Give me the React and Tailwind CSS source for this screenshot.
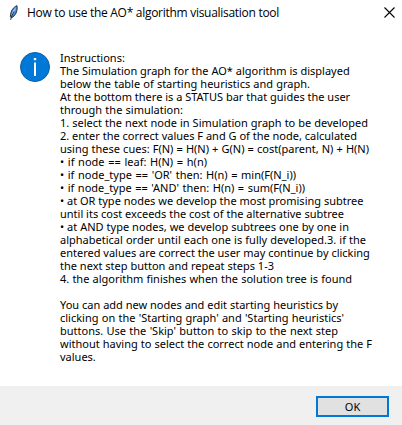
const lines = [
  ['Instructions:', 64],
  ['The Simulation graph for the AO* algorithm is displayed', 289],
  ['below the table of starting heuristics and graph.', 250],
  ['At the bottom there is a STATUS bar that guides the user', 289],
  ['through the simulation:', 123],
  ['1. select the next node in Simulation graph to be developed', 308],
  ['2. enter the correct values F and G of the node, calculated', 297],
  ['using these cues: F(N) = H(N) + G(N) = cost(parent, N) + H(N)', 309],
  ['• if node == leaf: H(N) = h(n)', 147],
  ["• if node_type == 'OR' then: H(n) = min(F(N_i))", 236],
  ["• if node_type == 'AND' then: H(n) = sum(F(N_i))", 245],
  ['• at OR type nodes we develop the most promising subtree', 303],
  ['until its cost exceeds the cost of the alternative subtree', 283],
  ['• at AND type nodes, we develop subtrees one by one in', 289],
  ['alphabetical order until each one is fully developed.3. if the', 306],
  ['entered values are correct the user may continue by clicking', 306],
  ['the next step button and repeat steps 1-3', 214],
  ['4. the algorithm finishes when the solution tree is found', 292],
  ['', 0],
  ['You can add new nodes and edit starting heuristics by', 278],
  ["clicking on the 'Starting graph' and 'Starting heuristics'", 284],
  ["buttons. Use the 'Skip' button to skip to the next step", 278],
  ['without having to select the correct node and entering the F', 312],
  ['values.', 35],
];

function Feather() {
  return (
    <svg className="ml-[9px] h-4 w-[10px]" viewBox="0 0 10 16">
      <path d="M8 .7C4.4 2 1.4 6 1.4 11.6l.9 1.2C6.6 11 8.8 6 8 .7Z" fill="#4f8ad6" stroke="#16212f" strokeWidth=".9" />
      <path d="M7.2 2C4.8 4 3 7 2.5 10.5 5 8 6.5 5 7.2 2Z" fill="#9cc8f5" />
      <path d="M5.2 6.5C3.6 9 2.2 12 1.6 15" fill="none" stroke="#1b1b1b" strokeWidth=".8" />
    </svg>
  );
}

export default function App() {
  return (
    <div className="flex h-[425px] w-[402px] flex-col overflow-hidden bg-white font-['Noto_Sans','Open_Sans',sans-serif] text-black">
      <header className="flex h-[26px] items-center">
        <Feather />
        <h1 className="ml-2 w-[252px] font-['Open_Sans','Noto_Sans',sans-serif] text-[12px] leading-4 whitespace-nowrap tracking-[-0.29px] [text-align-last:justify]">
          How to use the AO* algorithm visualisation tool
        </h1>
        <svg className="mb-[2px] ml-auto mr-[7px] h-[11px] w-[11px]" viewBox="0 0 11 11" stroke="#000" strokeWidth="1.1">
          <path d="M.5.5l10 10M10.5.5l-10 10" />
        </svg>
      </header>
      <main className="flex flex-1 pt-[25px]">
        <svg className="ml-5 mt-[1px] h-[30px] w-[30px] shrink-0" viewBox="0 0 30 30">
          <circle cx="15" cy="15" r="14.5" fill="#0078d7" stroke="#0a5ea6" />
          <path d="M13.8 6h2.4v2.2h-2.4zM14 10.5h2V24h-2z" fill="#fff" />
        </svg>
        <div className="ml-[10px] text-[11px] leading-[13px]">
          {lines.map(([text, width], i) => (
            <p key={i} className="h-[13px] whitespace-nowrap [text-align-last:justify]" style={{ width }}>
              {text}
            </p>
          ))}
        </div>
      </main>
      <footer className="flex h-[39px] justify-end bg-[#f0f0f0] pt-[10px] pr-[13px]">
        <button className="flex h-[21px] w-[73px] items-center justify-center border-2 border-[#0078d7] bg-[#e1e1e1] text-[11px] leading-none">
          OK
        </button>
      </footer>
    </div>
  );
}
